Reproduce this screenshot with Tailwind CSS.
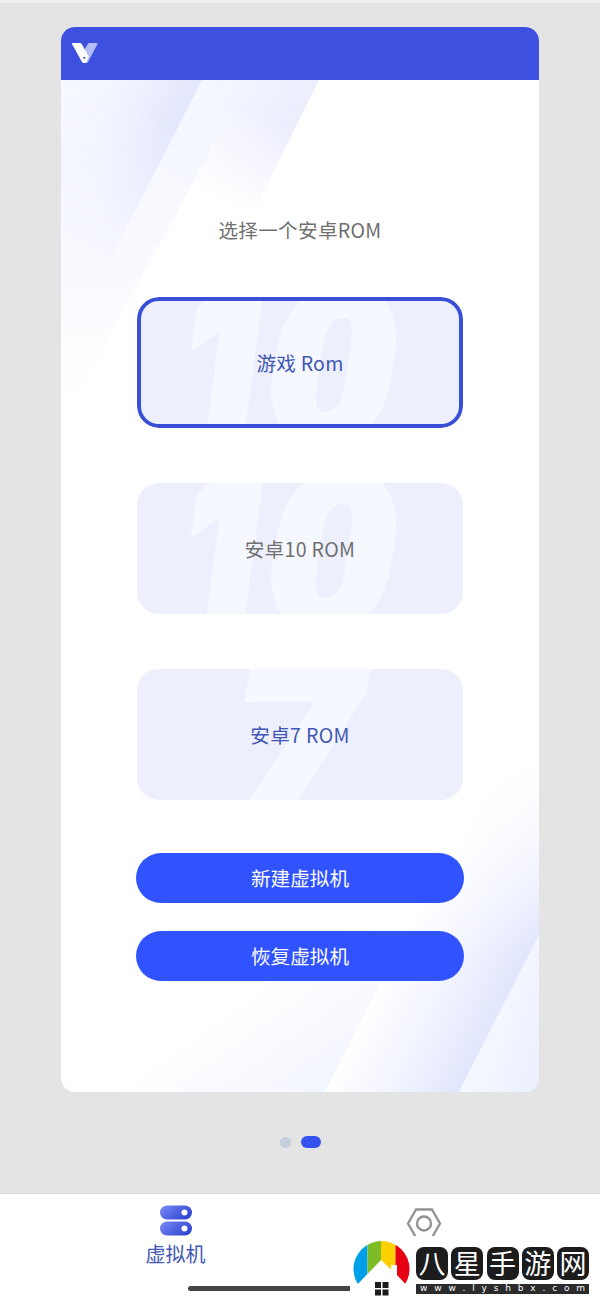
<!DOCTYPE html>
<html lang="zh-CN">
<head>
    <meta charset="UTF-8" />
    <meta name="viewport" content="width=device-width, initial-scale=1.0" />
    <title>虚拟机</title>
    <script src="https://cdn.jsdelivr.net/npm/@tailwindcss/browser@4"></script>
</head>
<body class="bg-[#e4e4e4] font-['Noto_Sans_CJK_SC',sans-serif]">
<div class="relative w-[600px] h-[1300px] overflow-hidden flex flex-col border-t-3 border-[#efefef]">
    <main class="flex-1 flex flex-col items-center pt-6">
        <section class="w-[478px] h-[1065px] rounded-[14px] overflow-hidden bg-white flex flex-col">
            <header class="h-[53px] shrink-0 bg-[#3d50df] pl-2.5 pt-[15px]">
                <svg class="w-[27px] h-[22px]" viewBox="0 0 27 22">
                    <path d="M13.500 7.500 17.500 1h8.500q1 0 .5 1L17 20q-.5 1-1.500 1h-3z" fill="#b4bcf5" />
                    <path d="M1.500 1H9q1 0 1.500.8l7.200 12.700-2.200 5.500q-.5 1-1.500 1h-1.500q-1 0-1.500-1L1 2Q.5 1 1.500 1z" fill="#fff" />
                    <circle cx="13.300" cy="15.800" r="1.100" fill="#3d50df" />
                </svg>
            </header>

            <div class="relative flex-1">
                <!-- 背景光束 -->
                <svg class="absolute inset-0 w-[478px] h-[1012px]" viewBox="0 0 478 1012">
                    <defs>
                        <linearGradient id="a1" gradientUnits="userSpaceOnUse" x1="2" y1="30" x2="104" y2="82">
                            <stop offset="0" stop-color="#f6f8ff" />
                            <stop offset=".5" stop-color="#eff1fe" />
                            <stop offset="1" stop-color="#e2e6fd" />
                        </linearGradient>
                        <linearGradient id="a2" gradientUnits="userSpaceOnUse" x1="120" y1="30" x2="225" y2="80">
                            <stop offset="0" stop-color="#f5f8ff" />
                            <stop offset="1" stop-color="#ecedfd" />
                        </linearGradient>
                        <linearGradient id="a3" gradientUnits="userSpaceOnUse" x1="0" y1="0" x2="0" y2="330">
                            <stop offset="0" stop-color="#f5f7ff" />
                            <stop offset=".6" stop-color="#f9faff" />
                            <stop offset="1" stop-color="#fff" />
                        </linearGradient>
                        <linearGradient id="f1" gradientUnits="userSpaceOnUse" x1="100" y1="40" x2="30" y2="180">
                            <stop offset="0" stop-color="#fff" />
                            <stop offset="1" stop-color="#000" />
                        </linearGradient>
                        <linearGradient id="f2" gradientUnits="userSpaceOnUse" x1="205" y1="40" x2="165" y2="125">
                            <stop offset="0" stop-color="#fff" />
                            <stop offset="1" stop-color="#000" />
                        </linearGradient>
                        <linearGradient id="f3" gradientUnits="userSpaceOnUse" x1="0" y1="670" x2="0" y2="870">
                            <stop offset="0" stop-color="#000" />
                            <stop offset="1" stop-color="#fff" />
                        </linearGradient>
                        <mask id="m1" maskUnits="userSpaceOnUse" x="0" y="0" width="478" height="400">
                            <rect width="478" height="400" fill="url(#f1)" />
                        </mask>
                        <mask id="m2" maskUnits="userSpaceOnUse" x="0" y="0" width="478" height="400">
                            <rect width="478" height="400" fill="url(#f2)" />
                        </mask>
                        <mask id="m3" maskUnits="userSpaceOnUse" x="0" y="600" width="478" height="412">
                            <rect y="600" width="478" height="412" fill="url(#f3)" />
                        </mask>
                        <linearGradient id="b1" gradientUnits="userSpaceOnUse" x1="331" y1="879" x2="438" y2="933">
                            <stop offset="0" stop-color="#fff" />
                            <stop offset=".45" stop-color="#f3f5ff" />
                            <stop offset=".75" stop-color="#eaedfe" />
                            <stop offset="1" stop-color="#e2e6fd" />
                        </linearGradient>
                        <linearGradient id="b2" gradientUnits="userSpaceOnUse" x1="430" y1="950" x2="478" y2="965">
                            <stop offset="0" stop-color="#f5f7ff" />
                            <stop offset="1" stop-color="#edf0fe" />
                        </linearGradient>
                        <linearGradient id="b3" gradientUnits="userSpaceOnUse" x1="215" y1="890" x2="285" y2="990">
                            <stop offset="0" stop-color="#fff" />
                            <stop offset="1" stop-color="#f4f6ff" />
                        </linearGradient>
                    </defs>
                    <path d="M0 0H180L144 80 0 345z" fill="url(#a3)" />
                    <path d="M141 0H258L176 165 100 80z" fill="url(#a2)" mask="url(#m2)" />
                    <path d="M0 0H141L36 205H0z" fill="url(#a1)" mask="url(#m1)" />
                    <path d="M478 590V855L398 1012H264z" fill="url(#b1)" mask="url(#m3)" />
                    <path d="M478 855V1012H398z" fill="url(#b2)" />
                    <path d="M60 1012 260 850 346 850 264 1012z" fill="url(#b3)" />
                </svg>

                <div class="relative flex flex-col items-center pt-[136px]">
                    <h1 class="h-7 leading-7 text-[19.6px] tracking-[0.3px] text-[#707070]">选择一个安卓ROM</h1>

                    <div class="mt-[53px] flex flex-col gap-[55px]">
                        <button class="relative w-[326px] h-[131px] rounded-[22px] overflow-hidden bg-[#edeffd] text-[19.6px] tracking-[0.2px] text-[#4257b4]">
                            <svg class="absolute inset-0 w-full h-full" viewBox="0 0 326 131">
                                <g font-style="italic" font-weight="900" fill="#f5f8ff" stroke="#f5f8ff">
                                    <text transform="translate(47 136) scale(.800 1)" font-family="Inter" font-size="198" stroke-width="9">1</text>
                                    <text transform="translate(130 144) scale(1.080 1)" font-family="Roboto" font-size="212" stroke-width="8">0</text>
                                </g>
                            </svg>
                            <span class="absolute inset-0 rounded-[22px] border-[4.5px] border-[#384fd6]"></span>
                            <span class="relative">游戏 Rom</span>
                        </button>
                        <button class="relative w-[326px] h-[131px] rounded-[22px] overflow-hidden bg-[#edeffd] text-[19.6px] tracking-[0.3px] text-[#707070]">
                            <svg class="absolute inset-0 w-full h-full" viewBox="0 0 326 131">
                                <g font-style="italic" font-weight="900" fill="#f5f8ff" stroke="#f5f8ff">
                                    <text transform="translate(47 136) scale(.800 1)" font-family="Inter" font-size="198" stroke-width="9">1</text>
                                    <text transform="translate(130 144) scale(1.080 1)" font-family="Roboto" font-size="212" stroke-width="8">0</text>
                                </g>
                            </svg>
                            <span class="relative">安卓10 ROM</span>
                        </button>
                        <button class="relative w-[326px] h-[131px] rounded-[22px] overflow-hidden bg-[#edeffd] text-[19.6px] tracking-[0.3px] text-[#4257b4]">
                            <svg class="absolute inset-0 w-full h-full" viewBox="0 0 326 131">
                                <text transform="translate(97 146) scale(1.120 1)" font-family="Roboto" font-weight="900" font-style="italic" font-size="200" fill="#f5f8ff" stroke="#f5f8ff" stroke-width="8">7</text>
                            </svg>
                            <span class="relative">安卓7 ROM</span>
                        </button>
                    </div>

                    <div class="mt-[53px] flex flex-col gap-7 text-[19.6px] text-white">
                        <button class="w-[328px] h-[50px] rounded-full bg-[#3053ff]">新建虚拟机</button>
                        <button class="w-[328px] h-[50px] rounded-full bg-[#3053ff]">恢复虚拟机</button>
                    </div>
                </div>
            </div>
        </section>

        <div class="mt-[44px] flex items-center gap-2.5">
            <span class="w-[11px] h-[11px] rounded-full bg-[#c3cddb]"></span>
            <span class="w-5 h-3 rounded-full bg-[#3453ee]"></span>
        </div>
    </main>

    <nav class="h-[107px] bg-white border-t border-[#d9d9d9] flex">
        <div class="w-[351px] flex flex-col items-center pt-[11px]">
            <svg class="w-8 h-[31px]" viewBox="0 0 32 31">
                <defs>
                    <linearGradient id="sw" x1="0" y1="0" x2="1" y2=".5">
                        <stop offset="0" stop-color="#7b8df6" />
                        <stop offset="1" stop-color="#3447d3" />
                    </linearGradient>
                </defs>
                <rect y=".5" width="32" height="14" rx="7" fill="url(#sw)" />
                <rect y="16.500" width="32" height="14" rx="7" fill="url(#sw)" />
                <circle cx="24.500" cy="7.500" r="3" fill="#fff" />
                <circle cx="24.500" cy="23.500" r="3" fill="#fff" />
            </svg>
            <span class="mt-1 leading-7 text-xl text-[#4257b4]">虚拟机</span>
        </div>
        <div class="w-[145px] flex justify-center pt-3.5">
            <svg class="w-9 h-[31px]" viewBox="0 0 36 31" fill="none" stroke="#929292" stroke-width="2.400">
                <path d="M10 1.500H26L34 15.500 26 29.500H10L2 15.500z" stroke-linejoin="round" />
                <circle cx="18" cy="15.500" r="7" />
            </svg>
        </div>
    </nav>

    <!-- 手势条 -->
    <div class="absolute left-[188px] bottom-[9px] w-[224px] h-[5px] rounded-full bg-[#454545]"></div>

    <!-- 站点水印 -->
    <div class="absolute right-0 bottom-0 w-[250px] h-16 bg-white flex">
        <svg class="ml-[3px] mt-[5px] w-[57px] h-14 shrink-0" viewBox="0 0 57 56">
            <defs>
                <clipPath id="arc"><circle cx="28.500" cy="28" r="28" /></clipPath>
            </defs>
            <g clip-path="url(#arc)">
                <rect width="14.500" height="56" fill="#00a0e9" />
                <rect x="14.500" width="13.500" height="56" fill="#7cbd27" />
                <rect x="28" width="14.500" height="56" fill="#fdd000" />
                <rect x="42.500" width="15" height="56" fill="#e60012" />
            </g>
            <path d="M0 48 28 19 38 28.500V24H44V34L57 48V56H0z" fill="#fff" />
            <path d="M22 41h6v6h-6zM29.500 41h6v6h-6zM22 48.500h6v6h-6zM29.500 48.500h6v6h-6z" fill="#1c1c1c" />
        </svg>
        <div class="ml-1.5 mt-[11px] w-[173px] flex flex-col">
            <div class="flex justify-between text-[27px] leading-[31px] text-white text-center">
                <span class="w-8 h-[33px] rounded-lg bg-[#1c1c1c]">八</span>
                <span class="w-8 h-[33px] rounded-lg bg-[#1c1c1c]">星</span>
                <span class="w-8 h-[33px] rounded-lg bg-[#1c1c1c]">手</span>
                <span class="w-8 h-[33px] rounded-lg bg-[#1c1c1c]">游</span>
                <span class="w-8 h-[33px] rounded-lg bg-[#1c1c1c]">网</span>
            </div>
            <div class="mt-1 h-2.5 bg-[#2b2b2b] text-white text-[9px] leading-[9px] flex justify-between px-1 font-['DejaVu_Sans',sans-serif]">
                <span>w</span><span>w</span><span>w</span><span>.</span><span>l</span><span>y</span><span>s</span><span>h</span><span>b</span><span>x</span><span>.</span><span>c</span><span>o</span><span>m</span>
            </div>
        </div>
    </div>
</div>
</body>
</html>
